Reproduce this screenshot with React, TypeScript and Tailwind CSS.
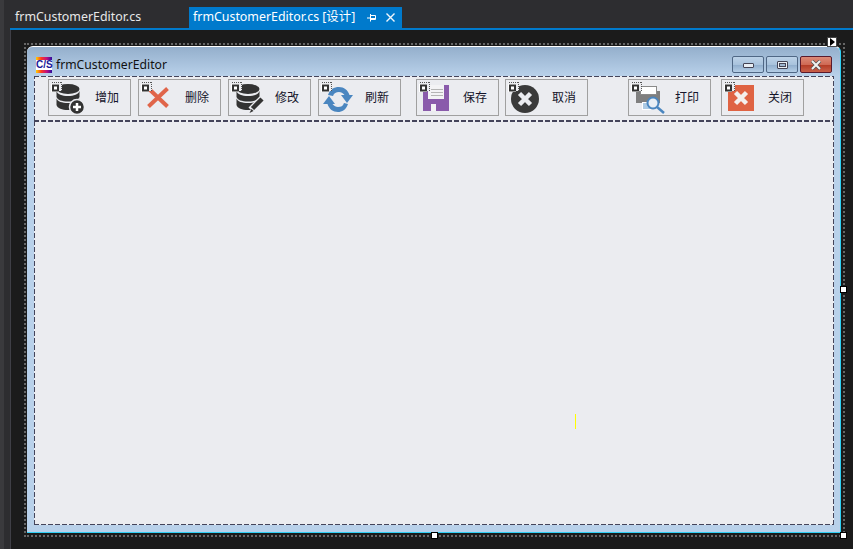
import React from "react";

const uiFont = "font-['Noto_Sans','Noto_Sans_CJK_SC',sans-serif]";

// designer dashed frame: longer dashes than a css dashed border, over the control colour
const dashedFrame =
  "bg-[repeating-linear-gradient(90deg,#44445a_0_5px,transparent_5px_7px),repeating-linear-gradient(90deg,#44445a_0_5px,transparent_5px_7px),repeating-linear-gradient(0deg,#44445a_0_5px,transparent_5px_7px),repeating-linear-gradient(0deg,#44445a_0_5px,transparent_5px_7px)] bg-[size:100%_1px,100%_1px,1px_100%,1px_100%] bg-[position:0_0,0_100%,0_0,100%_0] bg-no-repeat";

// little marker the designer draws on each component
function Marker() {
  return (
    <svg className="absolute left-[2px] top-[1px]" width="12" height="11" viewBox="0 0 12 11">
      <rect x="1" y="1" width="10" height="9" fill="#ebecf0" />
      <path d="M1 1.500H11M10.500 1V10" stroke="#555" strokeDasharray="1 1" fill="none" />
      <rect x="0" y="3" width="8" height="8" fill="#fff" />
      <rect x="1" y="3.500" width="7" height="7" fill="#333" />
      <rect x="3" y="5.500" width="3" height="3" fill="#fff" />
    </svg>
  );
}

function Cylinder() {
  return (
    <g fill="#333">
      <ellipse cx="13" cy="7" rx="11.500" ry="5" />
      <path d="M1.500 9c1 3.500 5.500 5 11.500 5s10.500-1.500 11.500-5v6c-1 3-5.500 4.500-11.500 4.500S2.500 18 1.500 15z" />
      <path d="M1.500 16.500c1 3 5.500 4.500 11.500 4.500s10.500-1.500 11.500-4.500V23c-1 3.500-5.500 5-11.500 5s-10.500-1.500-11.500-5z" />
    </g>
  );
}

function AddIcon() {
  return (
    <svg width="32" height="32" viewBox="0 0 32 32">
      <Cylinder />
      <circle cx="22" cy="25" r="7.500" fill="#333" stroke="#ebecf0" strokeWidth="1.500" />
      <path d="M18 25h8M22 21v8" stroke="#fff" strokeWidth="2.500" />
    </svg>
  );
}

function DeleteIcon() {
  return (
    <svg width="32" height="32" viewBox="0 0 32 32">
      <path d="M3.500 6.500l19 18M22.500 6.500l-19 18" stroke="#e0654a" strokeWidth="4" fill="none" />
    </svg>
  );
}

function EditIcon() {
  return (
    <svg width="32" height="32" viewBox="0 0 32 32" className="overflow-visible">
      <Cylinder />
      <path d="M27 17L16 28" stroke="#ebecf0" strokeWidth="7" />
      <path d="M27 17L17.500 26.500" stroke="#333" strokeWidth="4.500" />
      <path d="M16.500 27L14.500 31L18.500 29z" fill="#333" />
    </svg>
  );
}

function RefreshIcon() {
  return (
    <svg width="32" height="32" viewBox="0 0 32 32" className="overflow-visible">
      <g fill="#4a86c0">
        <path d="M3 13C5 7 9 5 14 5c5 0 9 3 10.500 8H28l-6 8-6-8h3.500C18 11 16 10 14 10c-3 0-5 1-6 4z" />
        <path d="M23 22c-2 6-6 8-10 8-5 0-9-3-10.500-8H-2l6-8 6 8H7.500C9 24 11 25 13 25c3 0 5-1 6-4z" />
      </g>
    </svg>
  );
}

function SaveIcon() {
  return (
    <svg width="32" height="32" viewBox="0 0 32 32">
      <rect x="0" y="3" width="26" height="26" fill="#8a5bab" />
      <rect x="5" y="3" width="16" height="14" fill="#f3f3f5" />
      <path d="M8 7.500h12M8 10.500h12M8 13.500h12" stroke="#b5b5b5" />
      <rect x="8" y="22" width="5" height="7" fill="#f3f3f5" />
    </svg>
  );
}

function CancelIcon() {
  return (
    <svg width="32" height="32" viewBox="0 0 32 32" className="overflow-visible">
      <circle cx="13" cy="17" r="14" fill="#3a3a3a" />
      <path d="M7.500 11.500l11 11M18.500 11.500l-11 11" stroke="#ebecf0" strokeWidth="4.500" />
    </svg>
  );
}

function PrintIcon() {
  return (
    <svg width="32" height="32" viewBox="0 0 32 32" className="overflow-visible">
      <rect x="1" y="9" width="24" height="12" fill="#7f7f7f" />
      <rect x="5.500" y="4.500" width="16" height="8" fill="#fff" stroke="#8a8a8a" />
      <rect x="7" y="20" width="9" height="8" fill="#fff" />
      <path d="M8 22h7M8 24h7M8 26h7" stroke="#5b94c8" />
      <circle cx="18" cy="21" r="5.500" fill="#e8eef5" stroke="#4a86c0" strokeWidth="2" />
      <path d="M22 25l7 6" stroke="#4a86c0" strokeWidth="2.500" />
    </svg>
  );
}

function CloseIcon() {
  return (
    <svg width="32" height="32" viewBox="0 0 32 32">
      <rect x="0" y="3" width="26" height="26" fill="#df6343" />
      <path d="M7.500 10.500l11 11M18.500 10.500l-11 11" stroke="#f4efec" strokeWidth="4.500" />
    </svg>
  );
}

function ToolButton({ label, icon, className = "" }: { label: string; icon: React.ReactNode; className?: string }) {
  return (
    <div className={`relative flex h-[37px] w-[83px] shrink-0 items-center border border-[#a0a0a0] ${className}`}>
      <div className="ml-[6px] mt-px h-[32px] w-[32px]">{icon}</div>
      <span className="ml-[8px] text-[12px] leading-none text-[#14142a]">{label}</span>
      <Marker />
    </div>
  );
}

function Handle({ className }: { className: string }) {
  return <div className={`absolute h-[7px] w-[7px] border border-black bg-white ${className}`} />;
}

function CaptionButton({ className, children }: { className: string; children: React.ReactNode }) {
  return (
    <div className={`flex h-[17px] w-[32px] items-center justify-center rounded-[2px] border ${className}`}>
      {children}
    </div>
  );
}

export default function App() {
  return (
    <div className={`flex h-[549px] w-[853px] overflow-hidden bg-[#2d2d30] ${uiFont}`}>
      {/* Left dock strip */}
      <div className="flex w-[10px] shrink-0">
        <div className="w-[4px] bg-[#3a3a3d]" />
        <div className="w-[6px] bg-[#2d2d30]" />
      </div>

      <div className="flex min-w-0 flex-1 flex-col">
        {/* Document tabs */}
        <div className="flex h-[28px] shrink-0 items-end">
          <div className="flex h-[21px] w-[179px] shrink-0 items-center pl-[5px] text-[12.4px] text-[#e8e8e8]">
            frmCustomerEditor.cs
          </div>
          <div className="flex h-[21px] w-[213px] shrink-0 items-center bg-[#007acc] pl-[4px] text-[12.4px] text-white">
            <span className="w-[172px] whitespace-nowrap">frmCustomerEditor.cs [设计]</span>
            <svg width="9" height="8" viewBox="0 0 9 8" className="ml-[2px]">
              <path d="M0 4h3M3 .5h1M3.500 .5v7M3.500 1.500h5v4h-5M3.500 4.500h5" stroke="#fff" fill="none" />
            </svg>
            <svg width="9" height="9" viewBox="0 0 9 9" className="ml-[10px]">
              <path d="M.5.500l8 8M8.500.500l-8 8" stroke="#f0f6fb" strokeWidth="1.400" />
            </svg>
          </div>
        </div>
        <div className="h-[2px] shrink-0 bg-[#007acc]" />

        {/* Design surface */}
        <div className="relative flex-1 border-l border-[#3f3f46] bg-[#1b1b1b] pl-[13px] pt-[13px]">
          <div className="relative h-[494px] w-[821px] border-2 border-dotted border-[#666] pb-[2px] pl-px pr-[2px] pt-px">
            {/* Form */}
            <div className="flex h-full flex-col rounded-t-[6px] border-r border-b border-t border-[#2fd0f5] border-t-white bg-[#b9d1ea] pl-[7px] pr-[6px] pb-[7px]">
              <div className="-ml-[7px] -mr-[6px] flex h-[29px] shrink-0 items-center rounded-t-[6px] bg-gradient-to-b from-[#94afcc] to-[#b9d1ea] pl-[9px] pr-[8px] pt-[6px]">
                <div className="flex h-[16px] w-[16px] items-center bg-[linear-gradient(90deg,#ffd400,#ff3a20,#c01080,#2a10a0)]">
                  <span className="block h-[10px] w-full bg-white text-center font-['Liberation_Sans',sans-serif] text-[10px] font-bold leading-[10px] text-[#1a1a9a]">
                    C/S
                  </span>
                </div>
                <span className="ml-[4px] mt-[2px] text-[12.2px] text-[#111]">frmCustomerEditor</span>
                <div className="ml-auto flex gap-[2px]">
                  <CaptionButton className="border-[#4f6785] bg-[linear-gradient(#bcd2e8,#a9c3dd_50%,#8fadcc_52%,#b4cde6)]">
                    <div className="mt-[2px] h-[5px] w-[11px] rounded-[1px] border border-[#445] bg-[#e8eef4]" />
                  </CaptionButton>
                  <CaptionButton className="border-[#4f6785] bg-[linear-gradient(#bcd2e8,#a9c3dd_50%,#8fadcc_52%,#b4cde6)]">
                    <div className="h-[8px] w-[11px] rounded-[1px] border border-[#445] bg-[#e8eef4] p-[1px]">
                      <div className="h-full border border-[#445] bg-[#9fb8d2]" />
                    </div>
                  </CaptionButton>
                  <CaptionButton className="border-[#5a1a2c] bg-[linear-gradient(#dc8a78,#cf6a55_50%,#b23a24_52%,#c9604a)]">
                    <svg width="14" height="10" viewBox="0 0 14 10">
                      <path d="M3 1l8 8M11 1L3 9" stroke="#555" strokeWidth="3.500" />
                      <path d="M3 1l8 8M11 1L3 9" stroke="#f2f2f2" strokeWidth="2" />
                    </svg>
                  </CaptionButton>
                </div>
              </div>

              {/* Toolbar */}
              <div className={`flex h-[45px] shrink-0 bg-[#ebecf0] pl-[14px] pt-[3px] ${dashedFrame}`}>
                <ToolButton label="增加" icon={<AddIcon />} />
                <ToolButton label="删除" icon={<DeleteIcon />} className="ml-[7px]" />
                <ToolButton label="修改" icon={<EditIcon />} className="ml-[7px]" />
                <ToolButton label="刷新" icon={<RefreshIcon />} className="ml-[7px]" />
                <ToolButton label="保存" icon={<SaveIcon />} className="ml-[15px]" />
                <ToolButton label="取消" icon={<CancelIcon />} className="ml-[6px]" />
                <ToolButton label="打印" icon={<PrintIcon />} className="ml-[40px]" />
                <ToolButton label="关闭" icon={<CloseIcon />} className="ml-[10px]" />
              </div>

              {/* Client area */}
              <div className={`flex-1 bg-[#ebecf0] ${dashedFrame}`} />
            </div>

            <div className="absolute left-[549px] top-[369px] h-[15px] w-px bg-[#ffff00]" />
            <div className="absolute -top-[8px] right-[6px] flex h-[10px] w-[10px] items-center justify-center border border-[#444] bg-white">
              <div className="h-0 w-0 border-y-[4px] border-l-[5px] border-y-transparent border-l-black" />
            </div>
            <Handle className="-right-[4px] top-[241px]" />
            <Handle className="-bottom-[4px] left-[405px]" />
            <Handle className="-bottom-[4px] -right-[4px]" />
          </div>
        </div>
      </div>
    </div>
  );
}
